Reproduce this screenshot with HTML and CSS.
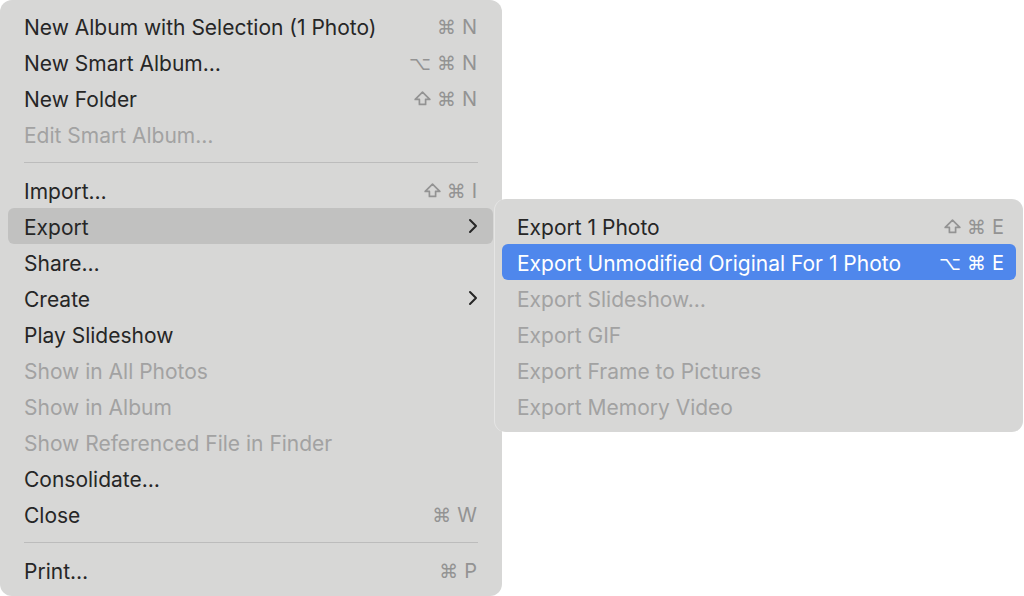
FILE: index.html
```html
<!DOCTYPE html>
<html>
<head>
<meta charset="utf-8">
<link rel="stylesheet" href="styles.css">
</head>
<body>
<div class="stage">
  <div class="menu main">
    <div class="item"><span class="label">New Album with Selection (1 Photo)</span><span class="key"><span class="g">⌘</span><span>N</span></span></div>
    <div class="item"><span class="label">New Smart Album…</span><span class="key"><span class="g">⌥</span><span class="g">⌘</span><span>N</span></span></div>
    <div class="item"><span class="label">New Folder</span><span class="key"><svg class="shift" width="17" height="15" viewBox="0 0 17 15"><path d="M8.5 1.2 L15.8 8.4 H11.6 V13.4 H5.4 V8.4 H1.2 Z" fill="none" stroke="currentColor" stroke-width="1.7" stroke-linejoin="round"/></svg><span class="g">⌘</span><span>N</span></span></div>
    <div class="item disabled"><span class="label">Edit Smart Album…</span></div>
    <div class="sep"></div>
    <div class="item"><span class="label">Import…</span><span class="key"><svg class="shift" width="17" height="15" viewBox="0 0 17 15"><path d="M8.5 1.2 L15.8 8.4 H11.6 V13.4 H5.4 V8.4 H1.2 Z" fill="none" stroke="currentColor" stroke-width="1.7" stroke-linejoin="round"/></svg><span class="g">⌘</span><span>I</span></span></div>
    <div class="item open"><span class="label">Export</span><svg class="chev" width="12" height="16" viewBox="0 0 12 16"><polyline points="3,2 9,8 3,14" fill="none" stroke="#262626" stroke-width="2" stroke-linecap="round" stroke-linejoin="round"/></svg></div>
    <div class="item"><span class="label">Share…</span></div>
    <div class="item"><span class="label">Create</span><svg class="chev" width="12" height="16" viewBox="0 0 12 16"><polyline points="3,2 9,8 3,14" fill="none" stroke="#262626" stroke-width="2" stroke-linecap="round" stroke-linejoin="round"/></svg></div>
    <div class="item"><span class="label">Play Slideshow</span></div>
    <div class="item disabled"><span class="label">Show in All Photos</span></div>
    <div class="item disabled"><span class="label">Show in Album</span></div>
    <div class="item disabled"><span class="label">Show Referenced File in Finder</span></div>
    <div class="item"><span class="label">Consolidate…</span></div>
    <div class="item"><span class="label">Close</span><span class="key"><span class="g">⌘</span><span>W</span></span></div>
    <div class="sep"></div>
    <div class="item"><span class="label">Print…</span><span class="key"><span class="g">⌘</span><span>P</span></span></div>
  </div>
  <div class="menu sub">
    <div class="item"><span class="label">Export 1 Photo</span><span class="key"><svg class="shift" width="17" height="15" viewBox="0 0 17 15"><path d="M8.5 1.2 L15.8 8.4 H11.6 V13.4 H5.4 V8.4 H1.2 Z" fill="none" stroke="currentColor" stroke-width="1.7" stroke-linejoin="round"/></svg><span class="g">⌘</span><span>E</span></span></div>
    <div class="item selected"><span class="label">Export Unmodified Original For 1 Photo</span><span class="key"><span class="g">⌥</span><span class="g">⌘</span><span>E</span></span></div>
    <div class="item disabled"><span class="label">Export Slideshow…</span></div>
    <div class="item disabled"><span class="label">Export GIF</span></div>
    <div class="item disabled"><span class="label">Export Frame to Pictures</span></div>
    <div class="item disabled"><span class="label">Export Memory Video</span></div>
  </div>
</div>
</body>
</html>
```
FILE: styles.css
```css
html, body {
  margin: 0;
  padding: 0;
  background: #ffffff;
}
.stage {
  position: relative;
  width: 1024px;
  height: 596px;
  overflow: hidden;
  font-family: Inter, "Liberation Sans", sans-serif;
  font-size: 21px;
}
.menu {
  background: #d7d7d6;
  box-sizing: border-box;
  display: flex;
  flex-direction: column;
}
.main {
  width: 502px;
  height: 596px;
  border-radius: 12px;
  padding: 8px 9px 8px 8px;
}
.sub {
  position: absolute;
  left: 495px;
  top: 199px;
  width: 528px;
  height: 233px;
  border-radius: 11px;
  padding: 9px 7px 8px 7px;
  box-shadow: -1px 0 0 rgba(255,255,255,0.35);
}
.item {
  height: 36px;
  flex: 0 0 36px;
  display: flex;
  align-items: center;
  justify-content: space-between;
  padding: 0 16px;
  border-radius: 6px;
  color: #262626;
}
.label {
  padding-top: 2px;
}
.sub .item {
  padding: 0 12px 0 15px;
}
.item.disabled {
  color: #a2a2a2;
}
.item.open {
  background: #c1c1c0;
}
.item.selected {
  background: #4f87ec;
  color: #ffffff;
}
.key {
  color: #939393;
  display: inline-flex;
  align-items: center;
  gap: 6px;
  font-family: Inter, "Liberation Sans", sans-serif;
  font-size: 20px;
  padding-top: 2px;
}
.item.selected .key {
  color: #ffffff;
}
.key .g {
  font-family: "DejaVu Sans", sans-serif;
  font-size: 19px;
}
.shift {
  display: block;
  margin-top: -2px;
}
.chev {
  margin-right: -2px;
}
.sep {
  flex: 0 0 20px;
  height: 20px;
  display: flex;
  align-items: center;
  padding: 0 15px 0 16px;
}
.sep::before {
  content: "";
  display: block;
  width: 100%;
  height: 1px;
  background: #bcbcbc;
}
```
